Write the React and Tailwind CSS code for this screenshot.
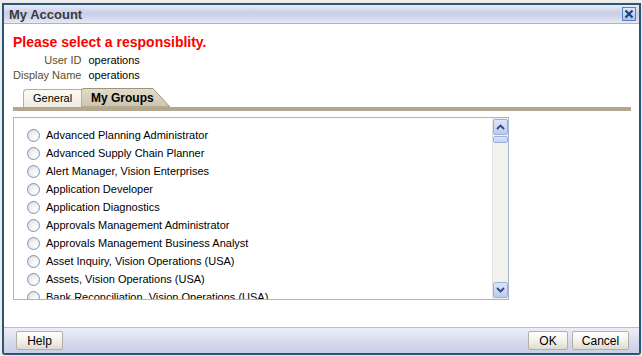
import React from "react";

const items = [
  "Advanced Planning Administrator",
  "Advanced Supply Chain Planner",
  "Alert Manager, Vision Enterprises",
  "Application Developer",
  "Application Diagnostics",
  "Approvals Management Administrator",
  "Approvals Management Business Analyst",
  "Asset Inquiry, Vision Operations (USA)",
  "Assets, Vision Operations (USA)",
  "Bank Reconciliation, Vision Operations (USA)",
];

function Radio() {
  return (
    <div className="w-[13px] h-[13px] rounded-full border border-[#8593ad] bg-[radial-gradient(circle_at_65%_65%,#ffffff_0%,#f1f2f5_40%,#cdd2dc_100%)] shrink-0" />
  );
}

function Btn({ children, w }) {
  return (
    <div
      className={`${w} h-[19px] flex items-center justify-center border border-[#b3b0a4] rounded-[2px] bg-[linear-gradient(#ffffff,#f3f2ec_50%,#dedbcd)] text-[12px] text-black`}
    >
      {children}
    </div>
  );
}

export default function App() {
  return (
    <div
      className="w-[642px] h-[356px] bg-[#ececec] pt-[3px] pl-[2px] overflow-hidden"
      style={{ fontFamily: '"Liberation Sans", Arial, sans-serif' }}
    >
      <div className="w-[639px] h-[352px] border-2 border-[#2a5573] rounded-b-[3px] bg-white flex flex-col overflow-hidden">
        {/* Title bar */}
        <div className="h-[19px] shrink-0 flex items-center justify-between pl-[5px] pr-[3px] bg-[linear-gradient(#e9ebf5,#c9cee8_45%,#d3d7ee_70%,#e6e9f5)] border-b border-[#a9b1d4]">
          <span className="text-[13px] font-bold text-[#3a3a3a] leading-none">My Account</span>
          <div className="w-[14px] h-[14px] border border-[#5d82b8] bg-[linear-gradient(#dbe7fb,#a9c2ea)] flex items-center justify-center">
            <svg width="10" height="10" viewBox="0 0 10 10">
              <path d="M1.5 1.5 L8.5 8.5 M8.5 1.5 L1.5 8.5" stroke="#1f3f78" strokeWidth="2.2" />
            </svg>
          </div>
        </div>

        {/* Body */}
        <div className="flex-1 pl-[9px] pr-[8px] pt-[9px] flex flex-col">
          <div className="text-[14px] font-bold text-[#ff0000] leading-[18px] whitespace-nowrap">Please select a responsiblity.</div>
          <div className="mt-[2px] grid grid-cols-[max-content_1fr] gap-x-[7px] text-[11px] leading-[15px] whitespace-nowrap">
            <span className="text-right text-[#5a4d2c]">User ID</span>
            <span className="text-black">operations</span>
            <span className="text-right text-[#5a4d2c]">Display Name</span>
            <span className="text-black">operations</span>
          </div>

          {/* Tabs */}
          <div className="mt-[5px] flex items-end pl-[10px] h-[19px]">
            <div className="relative h-[18px] w-[58px] border border-r-0 border-b-0 border-[#b6ae9c] rounded-tl-[4px] bg-[linear-gradient(#fbfaf5,#eeebe0)] flex items-center pl-[9px] text-[11px] text-black">
              General
            </div>
            <div className="relative h-[19px] w-[90px] flex items-center">
              <svg className="absolute inset-0" width="90" height="19" viewBox="0 0 90 19">
                <defs>
                  <linearGradient id="tg" x1="0" y1="0" x2="0" y2="1">
                    <stop offset="0" stopColor="#e2dccb" />
                    <stop offset="1" stopColor="#cdc4ad" />
                  </linearGradient>
                </defs>
                <path d="M0 19 L0 3 Q0 0.5 3 0.5 L72 0.5 L89 19 Z" fill="url(#tg)" stroke="#9e947d" strokeWidth="1" />
              </svg>
              <span className="relative pl-[10px] text-[12px] font-bold text-black">My Groups</span>
            </div>
          </div>
          <div className="h-[4px] w-[618px] bg-[#b3a790]" />

          {/* List */}
          <div className="mt-[6px] w-[496px] h-[183px] border border-[#a8b4cf] flex">
            <div className="flex-1 overflow-hidden pt-[8px] pl-[13px]">
              {items.map((t) => (
                <div key={t} className="h-[18px] flex items-center gap-[6px] text-[11px] text-black whitespace-nowrap">
                  <Radio />
                  <span>{t}</span>
                </div>
              ))}
            </div>
            <div className="w-[16px] bg-[#f1f1ee] border-l border-[#e4e4e0] flex flex-col justify-between py-[1px]">
              <div>
                <div className="h-[16px] border border-[#9db1d8] rounded-[2px] bg-[linear-gradient(#dbe6fa,#b8cbef)] flex items-center justify-center">
                  <svg width="9" height="6" viewBox="0 0 9 6">
                    <path d="M1 5 L4.5 1.5 L8 5" stroke="#34477a" strokeWidth="1.8" fill="none" />
                  </svg>
                </div>
                <div className="mt-[1px] h-[7px] border border-[#9db1d8] rounded-[2px] bg-[linear-gradient(#dbe6fa,#c2d2f0)]" />
              </div>
              <div className="h-[16px] border border-[#9db1d8] rounded-[2px] bg-[linear-gradient(#dbe6fa,#b8cbef)] flex items-center justify-center">
                <svg width="9" height="6" viewBox="0 0 9 6">
                  <path d="M1 1 L4.5 4.5 L8 1" stroke="#34477a" strokeWidth="1.8" fill="none" />
                </svg>
              </div>
            </div>
          </div>
        </div>

        {/* Footer */}
        <div className="h-[26px] shrink-0 border-t border-[#b5bcd9] bg-[linear-gradient(#eceef7,#d5d9ee_60%,#c9cee8)] flex items-center justify-between pl-[12px] pr-[10px]">
          <Btn w="w-[47px]">Help</Btn>
          <div className="flex gap-[4px]">
            <Btn w="w-[40px]">OK</Btn>
            <Btn w="w-[57px]">Cancel</Btn>
          </div>
        </div>
      </div>
    </div>
  );
}
